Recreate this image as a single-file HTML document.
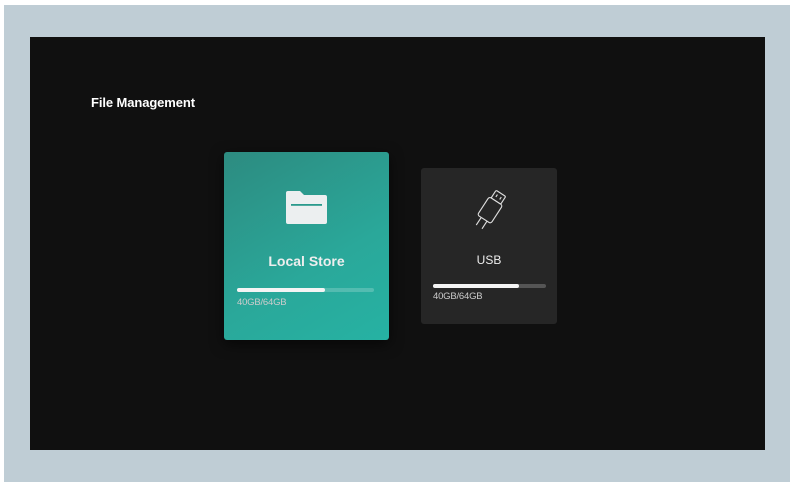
<!DOCTYPE html><html><head><style>
body{margin:0;width:799px;height:492px;background:#fff;position:relative;overflow:hidden;font-family:"Liberation Sans",sans-serif}
.bg{position:absolute;left:4px;top:5px;width:786px;height:477px;background:#bfcdd5}
.scr{position:absolute;left:30px;top:37px;width:735px;height:413px;background:#101010}
.t{position:absolute;left:91px;top:95px;color:#fff;font-size:13px;font-weight:bold;letter-spacing:-0.1px}
.c1{position:absolute;left:224px;top:152px;width:165px;height:188px;border-radius:3px;background:linear-gradient(150deg,#2d8b80,#2aa89a 60%,#26b2a3);box-shadow:0 4px 14px rgba(0,0,0,.6)}
.c2{position:absolute;left:421px;top:168px;width:136px;height:156px;border-radius:3px;background:#262626}
.lbl{position:absolute;width:100%;text-align:center;color:#eee}
.bar{position:absolute;height:4px;border-radius:2px}
.sm{position:absolute;font-size:9.5px;color:#ccc;letter-spacing:-0.2px}
</style></head><body>
<div class="bg"></div><div class="scr"></div>
<div class="t">File Management</div>
<div class="c1">
<svg style="position:absolute;left:61px;top:38px" width="43" height="35" viewBox="0 0 43 35"><path d="M1 3a2 2 0 0 1 2-2h12l4 4h21a2 2 0 0 1 2 2v25a2 2 0 0 1-2 2H3a2 2 0 0 1-2-2z" fill="#eceff0"/><rect x="6" y="14" width="31" height="1.8" fill="#2b9a8d"/></svg>
<div class="lbl" style="top:101px;font-size:14px;font-weight:bold">Local Store</div>
<div class="bar" style="left:13px;top:136px;width:137px;background:rgba(255,255,255,.2)"></div>
<div class="bar" style="left:13px;top:136px;width:88px;background:#f4f4f4"></div>
<div class="sm" style="left:13px;top:145px">40GB/64GB</div>
</div>
<div class="c2">
<svg style="position:absolute;left:47px;top:22px" width="46" height="48" viewBox="0 0 40 42" fill="none" stroke="#ddd" stroke-width="1" stroke-linejoin="round">
<g transform="rotate(33 20 20)">
<rect x="13" y="1" width="10" height="8" rx="1"/>
<path d="M16 3.5v2.5M20 3.5v2.5"/>
<rect x="11" y="9" width="14" height="19" rx="2"/>
<path d="M15 28v8M21 28v8"/>
</g></svg>
<div class="lbl" style="top:85px;font-size:12px">USB</div>
<div class="bar" style="left:12px;top:116px;width:113px;background:#555"></div>
<div class="bar" style="left:12px;top:116px;width:86px;background:#f4f4f4"></div>
<div class="sm" style="left:12px;top:123px">40GB/64GB</div>
</div>
</body></html>
